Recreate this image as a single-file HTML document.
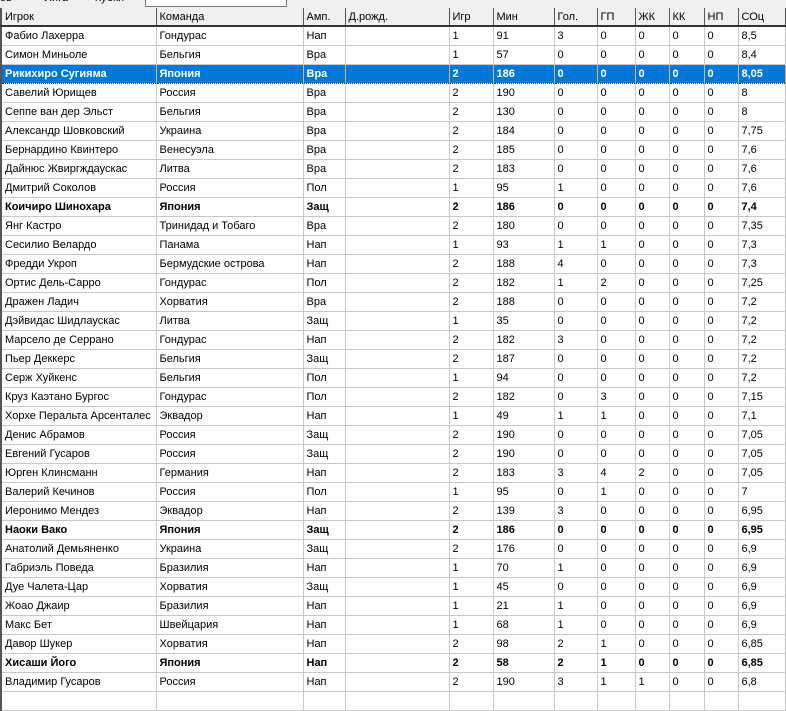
<!DOCTYPE html>
<html><head><meta charset="utf-8"><style>
body{margin:0;width:786px;height:696px;overflow:hidden;background:#fff;font-family:"Liberation Sans",Arial,sans-serif;font-size:11px;color:#000;position:relative}
.top{position:absolute;left:0;top:0;width:786px;height:8px;background:#f0f0f0;overflow:hidden}
.top span{position:absolute;top:-8px;font-size:11px}
.box2{position:absolute;left:145px;top:-6px;width:140px;height:11px;border:1px solid #7a7a7a;background:#fff}
table{position:absolute;left:0;top:8px;border-collapse:collapse;table-layout:fixed}
td,th{height:18px;padding:0 0 0 3px;white-space:nowrap;overflow:hidden;text-align:left;font-weight:normal;border-right:1px solid #c8c8c8;border-bottom:1px solid #c8c8c8}
th{background:#f0f0f0;border-right:1px solid #555;border-bottom:2px solid #333;height:17px}
td:first-child,th:first-child{border-left:2px solid #555}
tr.b td{font-weight:bold}
tr.s td{background:#0078d7;color:#fff;font-weight:bold;border-right:1px solid #d9b070;border-bottom:1px dotted #333}
</style></head><body>
<div class="top"><span style="left:0">ов</span><span style="left:35px">○ Лига</span><span style="left:85px">○ Кубки</span><div class="box2"></div></div>
<table>
<colgroup><col style="width:155px"><col style="width:147px"><col style="width:42px"><col style="width:104px"><col style="width:44px"><col style="width:61px"><col style="width:43px"><col style="width:38px"><col style="width:34px"><col style="width:35px"><col style="width:34px"><col style="width:47px"></colgroup>
<tr><th>Игрок</th><th>Команда</th><th>Амп.</th><th>Д.рожд.</th><th>Игр</th><th>Мин</th><th>Гол.</th><th>ГП</th><th>ЖК</th><th>КК</th><th>НП</th><th>СОц</th></tr>
<tr><td>Фабио Лахерра</td><td>Гондурас</td><td>Нап</td><td></td><td>1</td><td>91</td><td>3</td><td>0</td><td>0</td><td>0</td><td>0</td><td>8,5</td></tr>
<tr><td>Симон Миньоле</td><td>Бельгия</td><td>Вра</td><td></td><td>1</td><td>57</td><td>0</td><td>0</td><td>0</td><td>0</td><td>0</td><td>8,4</td></tr>
<tr class="s"><td>Рикихиро Сугияма</td><td>Япония</td><td>Вра</td><td></td><td>2</td><td>186</td><td>0</td><td>0</td><td>0</td><td>0</td><td>0</td><td>8,05</td></tr>
<tr><td>Савелий Юрищев</td><td>Россия</td><td>Вра</td><td></td><td>2</td><td>190</td><td>0</td><td>0</td><td>0</td><td>0</td><td>0</td><td>8</td></tr>
<tr><td>Сеппе ван дер Эльст</td><td>Бельгия</td><td>Вра</td><td></td><td>2</td><td>130</td><td>0</td><td>0</td><td>0</td><td>0</td><td>0</td><td>8</td></tr>
<tr><td>Александр Шовковский</td><td>Украина</td><td>Вра</td><td></td><td>2</td><td>184</td><td>0</td><td>0</td><td>0</td><td>0</td><td>0</td><td>7,75</td></tr>
<tr><td>Бернардино Квинтеро</td><td>Венесуэла</td><td>Вра</td><td></td><td>2</td><td>185</td><td>0</td><td>0</td><td>0</td><td>0</td><td>0</td><td>7,6</td></tr>
<tr><td>Дайнюс Жвиргждаускас</td><td>Литва</td><td>Вра</td><td></td><td>2</td><td>183</td><td>0</td><td>0</td><td>0</td><td>0</td><td>0</td><td>7,6</td></tr>
<tr><td>Дмитрий Соколов</td><td>Россия</td><td>Пол</td><td></td><td>1</td><td>95</td><td>1</td><td>0</td><td>0</td><td>0</td><td>0</td><td>7,6</td></tr>
<tr class="b"><td>Коичиро Шинохара</td><td>Япония</td><td>Защ</td><td></td><td>2</td><td>186</td><td>0</td><td>0</td><td>0</td><td>0</td><td>0</td><td>7,4</td></tr>
<tr><td>Янг Кастро</td><td>Тринидад и Тобаго</td><td>Вра</td><td></td><td>2</td><td>180</td><td>0</td><td>0</td><td>0</td><td>0</td><td>0</td><td>7,35</td></tr>
<tr><td>Сесилио Велардо</td><td>Панама</td><td>Нап</td><td></td><td>1</td><td>93</td><td>1</td><td>1</td><td>0</td><td>0</td><td>0</td><td>7,3</td></tr>
<tr><td>Фредди Укроп</td><td>Бермудские острова</td><td>Нап</td><td></td><td>2</td><td>188</td><td>4</td><td>0</td><td>0</td><td>0</td><td>0</td><td>7,3</td></tr>
<tr><td>Ортис Дель-Сарро</td><td>Гондурас</td><td>Пол</td><td></td><td>2</td><td>182</td><td>1</td><td>2</td><td>0</td><td>0</td><td>0</td><td>7,25</td></tr>
<tr><td>Дражен Ладич</td><td>Хорватия</td><td>Вра</td><td></td><td>2</td><td>188</td><td>0</td><td>0</td><td>0</td><td>0</td><td>0</td><td>7,2</td></tr>
<tr><td>Дэйвидас Шидлаускас</td><td>Литва</td><td>Защ</td><td></td><td>1</td><td>35</td><td>0</td><td>0</td><td>0</td><td>0</td><td>0</td><td>7,2</td></tr>
<tr><td>Марсело де Серрано</td><td>Гондурас</td><td>Нап</td><td></td><td>2</td><td>182</td><td>3</td><td>0</td><td>0</td><td>0</td><td>0</td><td>7,2</td></tr>
<tr><td>Пьер Деккерс</td><td>Бельгия</td><td>Защ</td><td></td><td>2</td><td>187</td><td>0</td><td>0</td><td>0</td><td>0</td><td>0</td><td>7,2</td></tr>
<tr><td>Серж Хуйкенс</td><td>Бельгия</td><td>Пол</td><td></td><td>1</td><td>94</td><td>0</td><td>0</td><td>0</td><td>0</td><td>0</td><td>7,2</td></tr>
<tr><td>Круз Каэтано Бургос</td><td>Гондурас</td><td>Пол</td><td></td><td>2</td><td>182</td><td>0</td><td>3</td><td>0</td><td>0</td><td>0</td><td>7,15</td></tr>
<tr><td>Хорхе Перальта Арсенталес</td><td>Эквадор</td><td>Нап</td><td></td><td>1</td><td>49</td><td>1</td><td>1</td><td>0</td><td>0</td><td>0</td><td>7,1</td></tr>
<tr><td>Денис Абрамов</td><td>Россия</td><td>Защ</td><td></td><td>2</td><td>190</td><td>0</td><td>0</td><td>0</td><td>0</td><td>0</td><td>7,05</td></tr>
<tr><td>Евгений Гусаров</td><td>Россия</td><td>Защ</td><td></td><td>2</td><td>190</td><td>0</td><td>0</td><td>0</td><td>0</td><td>0</td><td>7,05</td></tr>
<tr><td>Юрген Клинсманн</td><td>Германия</td><td>Нап</td><td></td><td>2</td><td>183</td><td>3</td><td>4</td><td>2</td><td>0</td><td>0</td><td>7,05</td></tr>
<tr><td>Валерий Кечинов</td><td>Россия</td><td>Пол</td><td></td><td>1</td><td>95</td><td>0</td><td>1</td><td>0</td><td>0</td><td>0</td><td>7</td></tr>
<tr><td>Иеронимо Мендез</td><td>Эквадор</td><td>Нап</td><td></td><td>2</td><td>139</td><td>3</td><td>0</td><td>0</td><td>0</td><td>0</td><td>6,95</td></tr>
<tr class="b"><td>Наоки Вако</td><td>Япония</td><td>Защ</td><td></td><td>2</td><td>186</td><td>0</td><td>0</td><td>0</td><td>0</td><td>0</td><td>6,95</td></tr>
<tr><td>Анатолий Демьяненко</td><td>Украина</td><td>Защ</td><td></td><td>2</td><td>176</td><td>0</td><td>0</td><td>0</td><td>0</td><td>0</td><td>6,9</td></tr>
<tr><td>Габриэль Поведа</td><td>Бразилия</td><td>Нап</td><td></td><td>1</td><td>70</td><td>1</td><td>0</td><td>0</td><td>0</td><td>0</td><td>6,9</td></tr>
<tr><td>Дуе Чалета-Цар</td><td>Хорватия</td><td>Защ</td><td></td><td>1</td><td>45</td><td>0</td><td>0</td><td>0</td><td>0</td><td>0</td><td>6,9</td></tr>
<tr><td>Жоао Джаир</td><td>Бразилия</td><td>Нап</td><td></td><td>1</td><td>21</td><td>1</td><td>0</td><td>0</td><td>0</td><td>0</td><td>6,9</td></tr>
<tr><td>Макс Бет</td><td>Швейцария</td><td>Нап</td><td></td><td>1</td><td>68</td><td>1</td><td>0</td><td>0</td><td>0</td><td>0</td><td>6,9</td></tr>
<tr><td>Давор Шукер</td><td>Хорватия</td><td>Нап</td><td></td><td>2</td><td>98</td><td>2</td><td>1</td><td>0</td><td>0</td><td>0</td><td>6,85</td></tr>
<tr class="b"><td>Хисаши Його</td><td>Япония</td><td>Нап</td><td></td><td>2</td><td>58</td><td>2</td><td>1</td><td>0</td><td>0</td><td>0</td><td>6,85</td></tr>
<tr><td>Владимир Гусаров</td><td>Россия</td><td>Нап</td><td></td><td>2</td><td>190</td><td>3</td><td>1</td><td>1</td><td>0</td><td>0</td><td>6,8</td></tr>
<tr><td></td><td></td><td></td><td></td><td></td><td></td><td></td><td></td><td></td><td></td><td></td><td></td></tr>
</table>
</body></html>
